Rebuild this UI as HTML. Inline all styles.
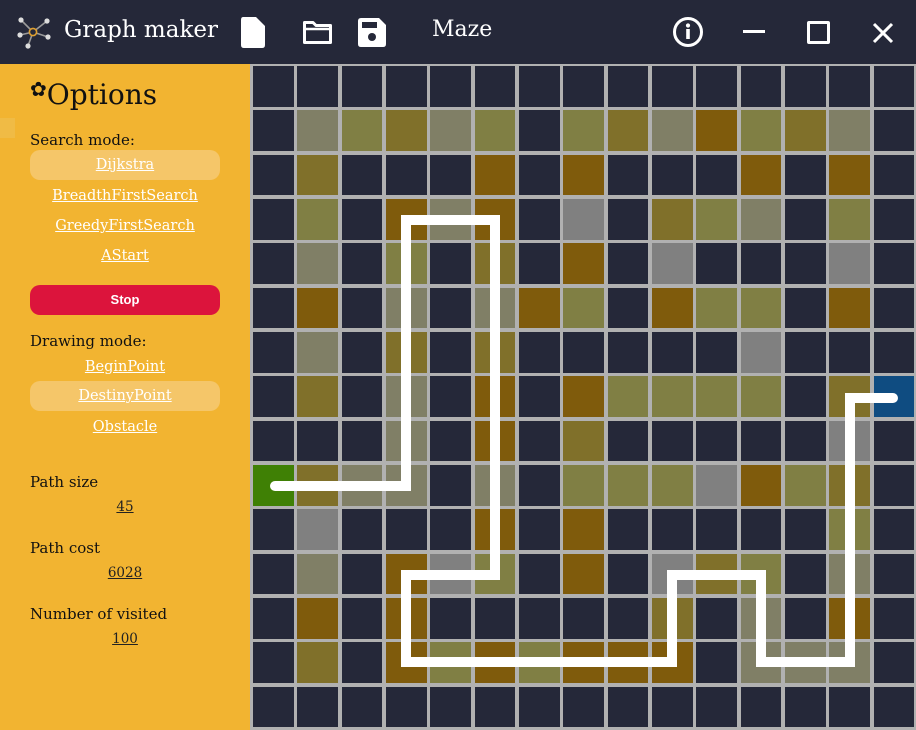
<!DOCTYPE html>
<html><head><meta charset="utf-8"><style>
*{margin:0;padding:0;box-sizing:border-box}
body{width:916px;height:730px;overflow:hidden;background:#252839;font-family:"DejaVu Serif","Liberation Serif",serif;position:relative}
#hdr{position:absolute;left:0;top:0;width:916px;height:64px;background:#252839;color:#fff}
#side{position:absolute;left:0;top:64px;width:250px;height:666px;background:#f2b431}
.t{position:absolute;white-space:nowrap}
.lbl{position:absolute;left:30px;font-size:15px;color:#111}
.lnk{position:absolute;left:30px;width:190px;height:30px;text-align:center;line-height:30px;font-size:14.5px;color:#fff;text-decoration:underline;border-radius:10px}
.hl{background:#f5c669}
.num{position:absolute;left:30px;width:190px;text-align:center;font-size:13.5px;color:#222;text-decoration:underline}
#grid{position:absolute;left:250px;top:64px;width:666px;height:666px;background:#b1b1b1}
</style></head><body>
<div id="hdr">
<svg class="t" style="left:16px;top:15px" width="36" height="36" viewBox="0 0 36 36">
<g stroke="#9a9a9a" stroke-width="1.6" fill="none"><line x1="17" y1="17" x2="5" y2="5"/><line x1="17" y1="17" x2="31" y2="6"/><line x1="17" y1="17" x2="4" y2="20"/><line x1="17" y1="17" x2="32" y2="22"/><line x1="17" y1="17" x2="12" y2="31"/></g>
<g fill="#ddd"><circle cx="5" cy="5" r="2.6"/><circle cx="31" cy="6" r="2.6"/><circle cx="4" cy="20" r="2.6"/><circle cx="32" cy="22" r="2.6"/><circle cx="12" cy="31" r="2.6"/></g>
<circle cx="17" cy="17" r="3.6" fill="#252839" stroke="#e0a030" stroke-width="1.6"/></svg>
<div class="t" style="left:64px;top:17px;font-size:23px">Graph maker</div>
<svg class="t" style="left:240px;top:17px" width="26" height="31" viewBox="0 0 26 31"><path d="M3 0H16L25 9V28Q25 31 22 31H4Q1 31 1 28V3Q1 0 3 0Z" fill="#fff"/></svg>
<svg class="t" style="left:302px;top:20px" width="31" height="25" viewBox="0 0 31 25"><path d="M2.5 2.5H11L14 5.5H28.5V22.5H2.5Z" fill="none" stroke="#fff" stroke-width="3" stroke-linejoin="round"/><line x1="2.5" y1="9" x2="28.5" y2="9" stroke="#fff" stroke-width="2.5"/></svg>
<svg class="t" style="left:358px;top:18px" width="28" height="29" viewBox="0 0 28 29"><path d="M3 0H21L28 7V26Q28 29 25 29H3Q0 29 0 26V3Q0 0 3 0Z" fill="#fff"/><rect x="4" y="4" width="15" height="6" fill="#252839"/><circle cx="14" cy="19" r="4" fill="#252839"/></svg>
<div class="t" style="left:432px;top:17px;font-size:22px">Maze</div>
<svg class="t" style="left:672px;top:16px" width="32" height="32" viewBox="0 0 32 32"><circle cx="16" cy="16" r="13.5" fill="none" stroke="#fff" stroke-width="3"/><rect x="14.2" y="13" width="3.6" height="10" fill="#fff"/><circle cx="16" cy="9.5" r="2.1" fill="#fff"/></svg>
<div class="t" style="left:743px;top:30px;width:22px;height:3px;background:#fff"></div>
<div class="t" style="left:807px;top:21px;width:23px;height:23px;border:3px solid #fff;border-radius:2px"></div>
<svg class="t" style="left:871px;top:21px" width="24" height="24" viewBox="0 0 24 24"><path d="M3 3L21 21M21 3L3 21" stroke="#fff" stroke-width="3"/></svg>
</div>
<div id="side">
<div class="t" style="left:0;top:54px;width:15px;height:20px;background:#f0bb45"></div>
<div class="t" style="left:30px;top:13px;font-size:28px;color:#111"><span style="font-size:20px;vertical-align:8px;font-family:'DejaVu Sans',sans-serif">✿</span>Options</div>
<div class="lbl" style="top:67px">Search mode:</div>
<div class="lnk hl" style="top:86px">Dijkstra</div>
<div class="lnk" style="top:117px">BreadthFirstSearch</div>
<div class="lnk" style="top:147px">GreedyFirstSearch</div>
<div class="lnk" style="top:177px">AStart</div>
<div class="lnk" style="top:221px;background:#dc143c;text-decoration:none;font-family:'Liberation Sans',sans-serif;font-size:13px;font-weight:bold">Stop</div>
<div class="lbl" style="top:268px">Drawing mode:</div>
<div class="lnk" style="top:288px">BeginPoint</div>
<div class="lnk hl" style="top:317px">DestinyPoint</div>
<div class="lnk" style="top:348px">Obstacle</div>
<div class="lbl" style="top:409px">Path size</div>
<div class="num" style="top:435px">45</div>
<div class="lbl" style="top:475px">Path cost</div>
<div class="num" style="top:501px">6028</div>
<div class="lbl" style="top:541px">Number of visited</div>
<div class="num" style="top:567px">100</div>
</div>
<div id="grid"></div>
<svg class="t" style="left:0;top:0" width="916" height="730"><polyline points="275,486 406,486 406,220 495,220 495,575 406,575 406,662 672,662 672,575 761,575 761,662 850,662 850,398 893,398" fill="none" stroke="#fff" stroke-width="10" stroke-linecap="round" stroke-linejoin="miter"/></svg>
<script>
var rows=["DDDDDDDDDDDDDDD","DGOYGODOYGBOYGD","DYDDDBDBDDDBDBD","DODBGBDNDYOGDOD","DGDODYDBDNDDDND","DBDGDGBODBOODBD","DGDYDYDDDDDNDDD","DYDGDBDBOOOODYU","DDDGDBDYDDDDDND","EYGGDGDOOONBOYD","DNDDDBDBDDDDDOD","DGDBNODBDNYODGD","DBDBDDDDDYDGDBD","DYDBOBOBBBDGGGD","DDDDDDDDDDDDDDD"];
var col={D:"#252839",G:"#807f66",O:"#807f44",Y:"#80702a",B:"#7f5b0c",N:"#808080",U:"#0f4c81",E:"#3f8005"};
var g=document.getElementById("grid"),h="";
for(var r=0;r<15;r++)for(var c=0;c<15;c++){h+='<div style="position:absolute;left:'+(3+c*44.33).toFixed(1)+'px;top:'+(2+r*44.33).toFixed(1)+'px;width:40.5px;height:40.5px;background:'+col[rows[r][c]]+'"></div>';}
g.innerHTML=h;
</script>
</body></html>
